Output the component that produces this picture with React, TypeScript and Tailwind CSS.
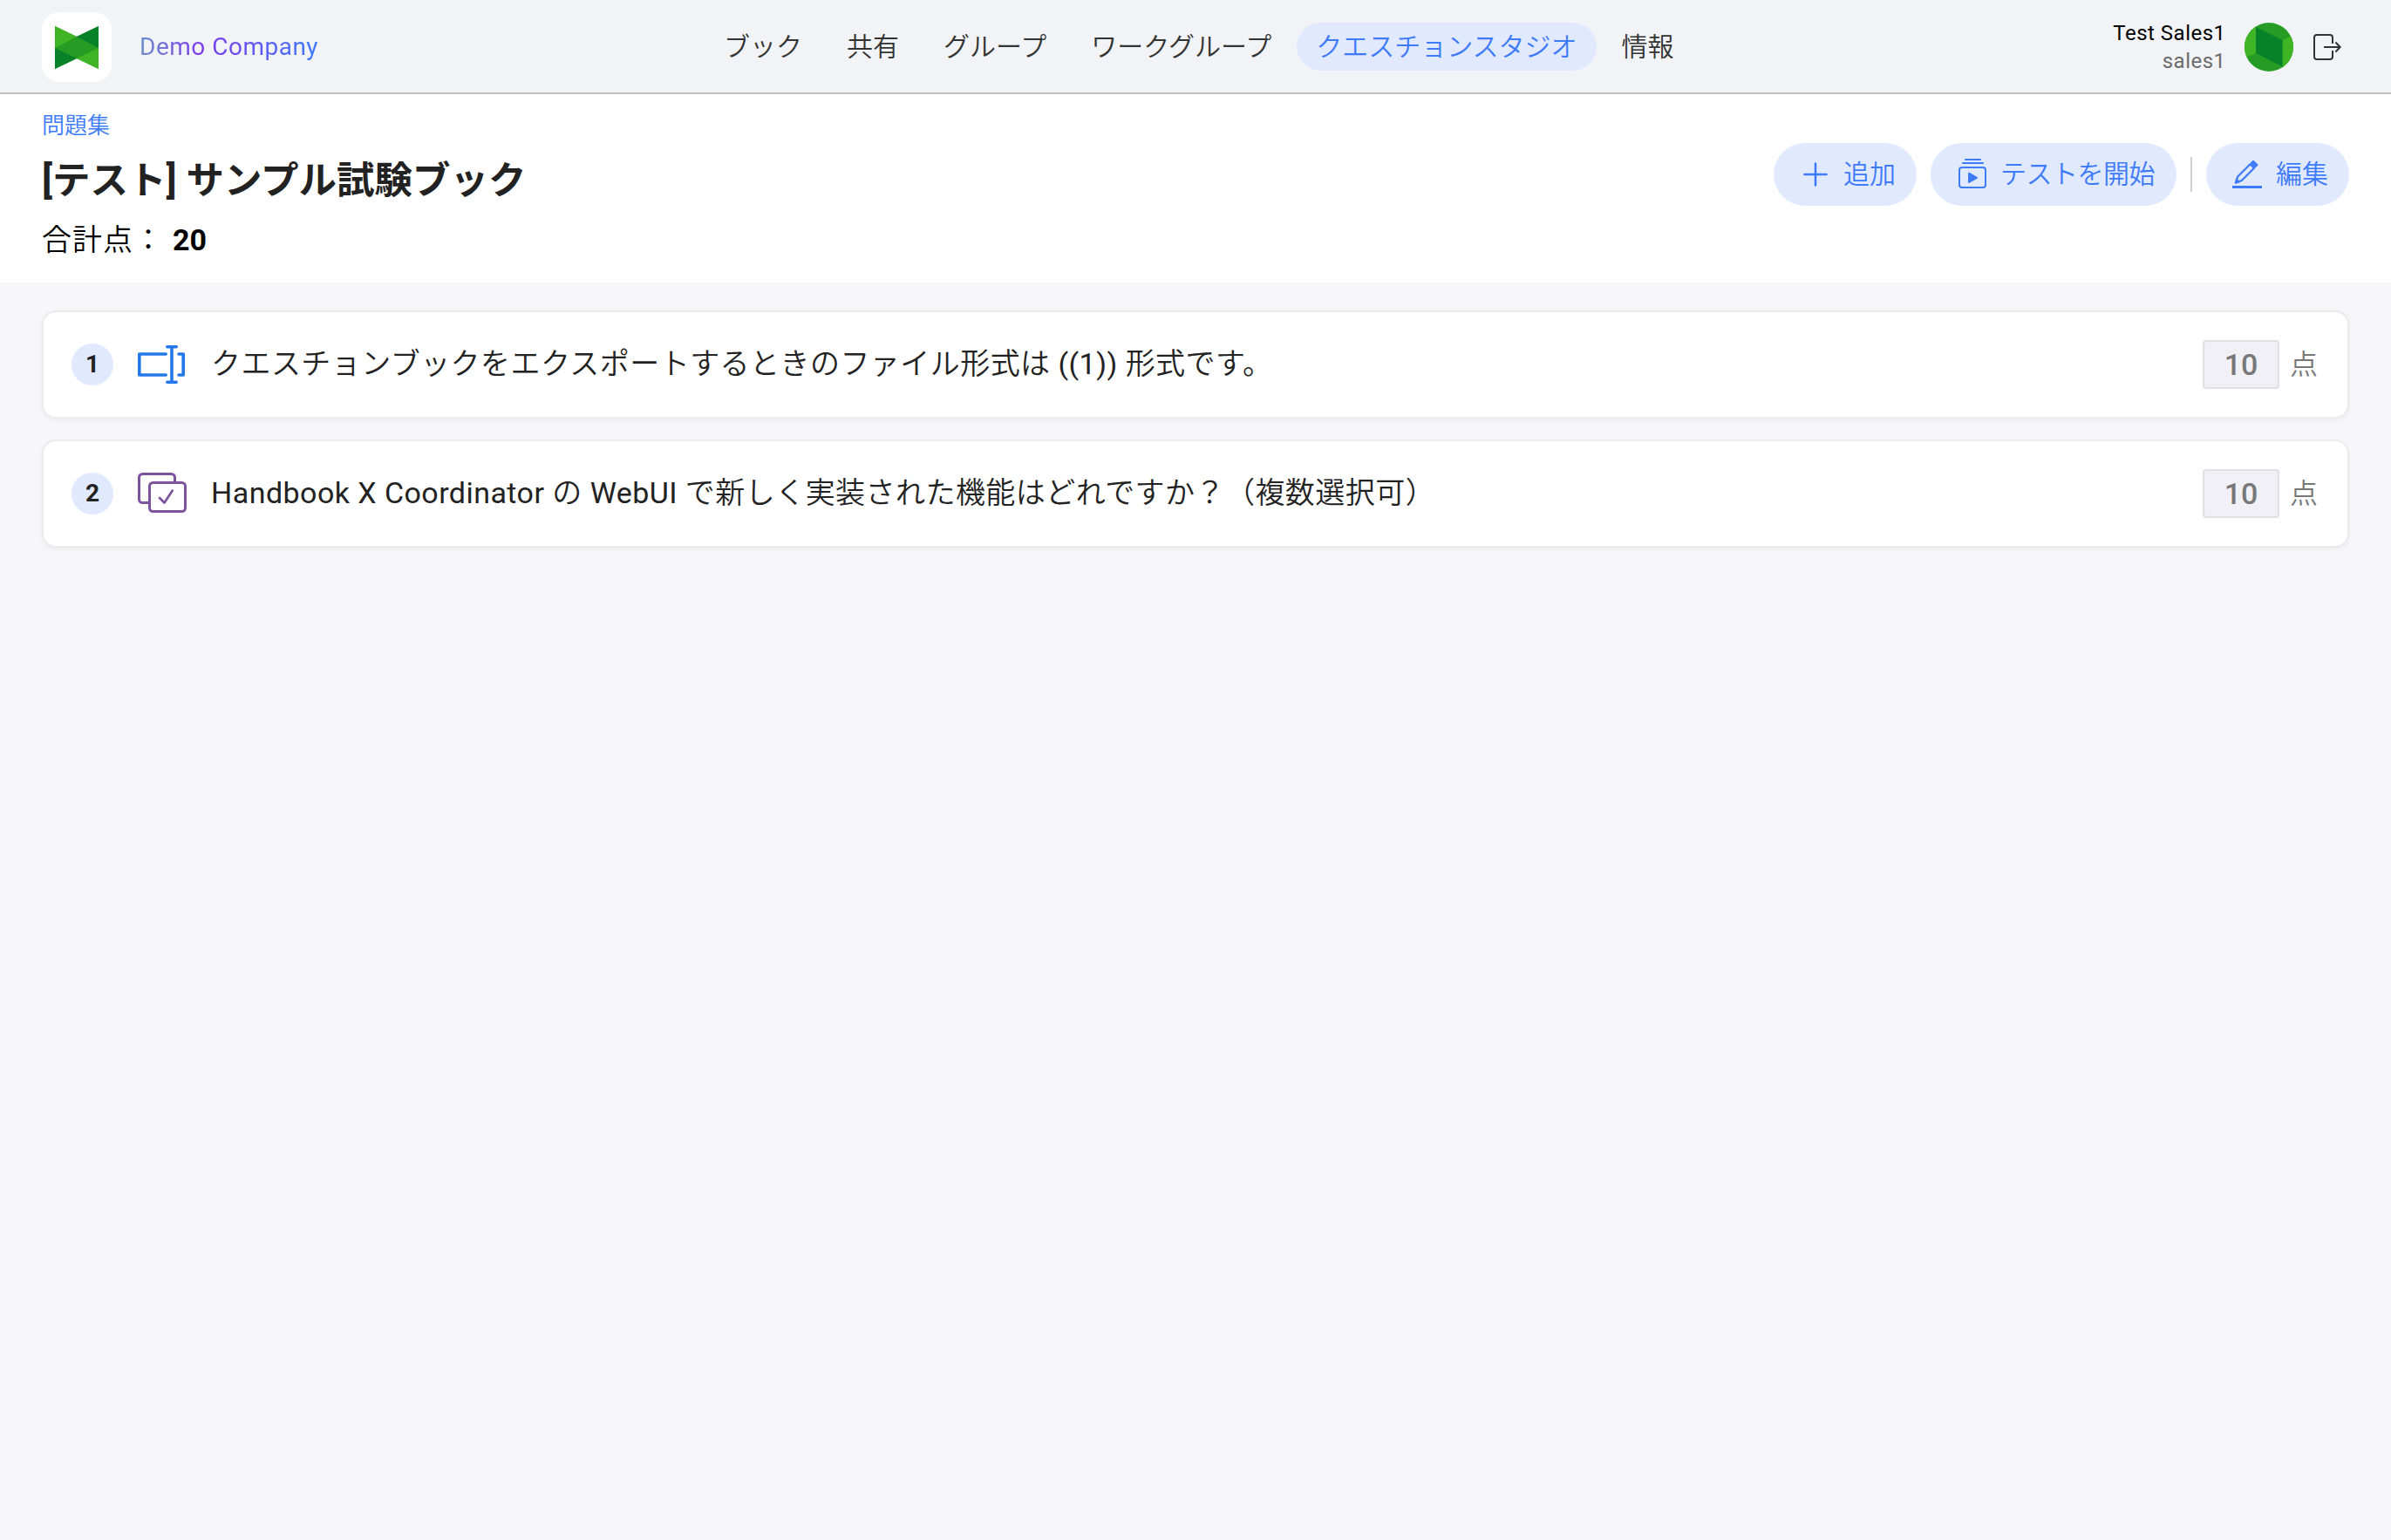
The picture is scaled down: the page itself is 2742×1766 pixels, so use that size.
import React from "react";

const nav = ["ブック", "共有", "グループ", "ワークグループ", "クエスチョンスタジオ", "情報"];
const questions = [
  { kind: "fill", text: "クエスチョンブックをエクスポートするときのファイル形式は ((1)) 形式です。", point: 10 },
  { kind: "multi", text: "Handbook X Coordinator の WebUI で新しく実装された機能はどれですか？（複数選択可）", point: 10 },
];

function Logo() {
  return (
    <svg viewBox="0 0 50 49" className="w-[50px] h-[49px]">
      <path d="M0 0 L25 12 L50 0 V49 L25 37 L0 49 Z" fill="#279c24" />
      <path d="M0 0 L25 12 L0 25 Z" fill="#3fb424" />
      <path d="M50 0 L25 12 L50 25 Z" fill="#088229" />
      <path d="M0 25 L25 37 L0 49 Z" fill="#088229" />
      <path d="M50 25 L25 37 L50 49 Z" fill="#3fb424" />
    </svg>
  );
}

function Avatar() {
  return (
    <svg viewBox="0 0 56 56" className="w-14 h-14 rounded-full">
      <rect width="56" height="56" fill="#279c24" />
      <path d="M0 0 H13 V35 L0 40 Z" fill="#3fb424" />
      <path d="M43.500 20 L56 14 V56 H43.500 Z" fill="#3fb424" />
      <path d="M13 5 L43.500 20 V50.500 L13 35 Z" fill="#088229" />
    </svg>
  );
}

function ExitIcon() {
  return (
    <svg viewBox="0 0 32 30" className="w-8 h-[30px]" fill="none" stroke="#333" strokeWidth="2">
      <path d="M22 11 V4 a3 3 0 0 0 -3 -3 H4 a3 3 0 0 0 -3 3 V26 a3 3 0 0 0 3 3 H19 a3 3 0 0 0 3 -3 V19" />
      <path d="M12 15 H30 M25.500 9.500 L30.700 15 L25.500 20.500" />
    </svg>
  );
}

function PlusIcon() {
  return (
    <svg viewBox="0 0 40 40" className="w-10 h-10" stroke="#3e7bfa" strokeWidth="2.500" strokeLinecap="round">
      <path d="M20 7.500 V32.500 M7.500 20 H32.500" />
    </svg>
  );
}

function PlayIcon() {
  return (
    <svg viewBox="0 0 40 40" className="w-10 h-10" fill="none" stroke="#3e7bfa" strokeWidth="2" strokeLinecap="round" strokeLinejoin="round">
      <rect x="5" y="12" width="30" height="23" rx="3" />
      <path d="M9 7 H32 M12 3 H29" />
      <path d="M16 18.700 L25 23.800 L16 29 Z" fill="#3e7bfa" />
    </svg>
  );
}

function EditIcon() {
  return (
    <svg viewBox="0 0 40 40" className="w-10 h-10" fill="none" stroke="#3e7bfa" strokeWidth="2.300" strokeLinejoin="round">
      <path d="M2 34.500 H36" strokeWidth="3" />
      <path d="M6 29.500 L8.200 22.500 L22.500 8.200 L27 12.700 L12.800 27 Z" />
      <path d="M6 29.500 L7 26 L9.500 28.500 Z" fill="#3e7bfa" />
      <path d="M24 7 L26 5 L30.300 9 L28.300 11.200 Z" fill="#3e7bfa" />
    </svg>
  );
}

function FillIcon() {
  return (
    <svg viewBox="0 0 56 48" className="w-14 h-12" fill="none" stroke="#2378ea" strokeWidth="3.600" strokeLinecap="round" strokeLinejoin="round">
      <path d="M32.200 12 H1.800 V36 H32.200 M47 12 H52.200 V36 H47" />
      <path d="M39 3.800 V44.200 M33.800 3.800 H44.200 M33.800 44.200 H44.200" />
    </svg>
  );
}

function MultiIcon() {
  return (
    <svg viewBox="0 0 56 48" className="w-14 h-12" fill="none" stroke="#7d549c" strokeWidth="3" strokeLinecap="round" strokeLinejoin="round">
      <path d="M42.500 10 V5.500 a4 4 0 0 0 -4 -4 H5.500 a4 4 0 0 0 -4 4 V30.500 a4 4 0 0 0 4 4 H12" />
      <rect x="13.500" y="11.500" width="41" height="33" rx="4" />
      <path d="M25 29 L30.500 34.500 L39.800 20.500" strokeWidth="2.700" />
    </svg>
  );
}

/* Latin runs keep the regular weight, Japanese runs use the demi-light one. */
function Mixed({ text }: { text: string }) {
  return (
    <>
      {text.split(/([A-Za-z0-9() ]+)/).map((part, i) => (
        <span key={i} className={i % 2 ? "font-normal" : "font-[350]"}>{part}</span>
      ))}
    </>
  );
}

const btn = "flex items-center h-[72px] pl-7 gap-3 rounded-full bg-[#e1e9ff] text-[#3e7bfa] text-[30px] font-[350] whitespace-nowrap";

export default function App() {
  return (
    <div lang="ja" className="w-full h-[1766px] flex flex-col bg-[#f6f6fb] text-[#222] font-['Roboto','Noto_Sans_CJK_JP',sans-serif] overflow-hidden">
      <header className="h-[108px] shrink-0 border-b-2 border-[#bfbfbf] bg-[#f2f3f6] grid grid-cols-[808px_1fr_801px] items-center pt-[2px]">
        <div className="flex items-center pl-12 gap-8">
          <div className="w-20 h-20 rounded-[20px] bg-white flex items-center justify-center"><Logo /></div>
          <span className="text-[28px] tracking-[0.5px] bg-[linear-gradient(90deg,#6d8fc8,#7c3aed_35%,#3e7bfa)] bg-clip-text text-transparent">Demo Company</span>
        </div>
        <nav className="flex gap-[7px] mb-0.5 font-[350]">
          {nav.map((n, i) => (
            <a key={n} className={i === 4 ? "h-[55px] px-[22px] rounded-full bg-[#e1e9ff] text-[#3e7bfa] text-[30px] leading-[55px] whitespace-nowrap" : "h-[55px] px-[22px] text-[30px] leading-[55px] whitespace-nowrap text-[#333]"}>{n}</a>
          ))}
        </nav>
        <div className="flex items-center justify-end pr-[58px]">
          <div className="text-right text-[24px] leading-8 tracking-[0.5px] mr-[21px]">
            <div className="text-black">Test Sales1</div>
            <div className="text-[#6b6b6b]">sales1</div>
          </div>
          <Avatar />
          <div className="ml-[23px]"><ExitIcon /></div>
        </div>
      </header>
      <section className="h-[216px] shrink-0 bg-white px-12 flex justify-between">
        <div className="pt-[17px]">
          <div className="text-[26px] leading-[38px] text-[#3e7bfa] font-[350]">問題集</div>
          <h1 className="text-[43.500px] leading-[60px] mt-[15px] font-bold">[テスト] サンプル試験ブック</h1>
          <div className="text-[34px] leading-[50px] mt-3 text-black flex"><span className="tracking-[1px] font-[350]">合計点：</span><b className="ml-2.5">20</b></div>
        </div>
        <div className="pt-14 flex gap-4">
          <button className={btn + " w-[164px]"}><PlusIcon /><span className="mb-0.5">追加</span></button>
          <button className={btn + " w-[282px]"}><PlayIcon /><span className="mb-0.5 tracking-[-0.5px]">テストを開始</span></button>
          <div className="w-0.5 h-10 mt-4 bg-[#d0d0d4]" />
          <button className={btn + " w-[164px]"}><EditIcon /><span className="mb-0.5">編集</span></button>
        </div>
      </section>
      <main className="px-12 pt-8 flex flex-col gap-6">
        {questions.map((q, i) => (
          <div key={i} className="h-[124px] flex items-center rounded-2xl border-2 border-[#ebebeb] bg-white shadow-[0_2px_6px_rgba(0,0,0,0.05)] pl-8 pr-[34px]">
            <div className="w-12 h-12 rounded-full bg-[#e1e9ff] flex items-center justify-center text-[28px] font-bold">{i + 1}</div>
            <div className="ml-7">{q.kind === "fill" ? <FillIcon /> : <MultiIcon />}</div>
            <div className="ml-7 mb-px flex-1 text-[34px] whitespace-nowrap tracking-[0.45px]"><Mixed text={q.text} /></div>
            <div className="w-[88px] h-14 rounded border-2 border-[#e0dfe5] bg-[#f1f0f6] flex items-center justify-center text-[34px] font-medium text-[#777]">{q.point}</div>
            <div className="ml-3 mb-px text-[32px] text-[#777] font-[350]">点</div>
          </div>
        ))}
      </main>
    </div>
  );
}
